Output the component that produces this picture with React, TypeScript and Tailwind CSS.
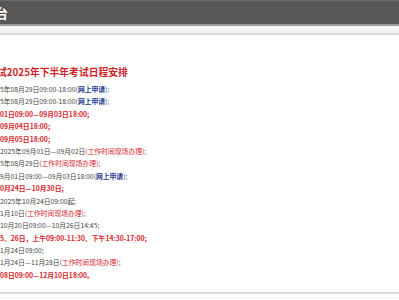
import React from "react";

const font = { fontFamily: '"Noto Sans CJK SC", "Noto Sans", sans-serif' };

type Seg = { t: string; c?: "red" | "blue" | "redb" };

const lines: Seg[][] = [
  [{ t: "5年08月29日09:00-18:00(" }, { t: "网上申请", c: "blue" }, { t: ");" }],
  [{ t: "5年08月29日09:00-18:00(" }, { t: "网上申请", c: "blue" }, { t: ");" }],
  [{ t: "01日09:00—09月03日18:00;", c: "redb" }],
  [{ t: "09月04日18:00;", c: "redb" }],
  [{ t: "09月05日18:00;", c: "redb" }],
  [{ t: "2025年09月01日—09月02日" }, { t: "(工作时间现场办理)", c: "red" }, { t: ";" }],
  [{ t: "5年08月29日" }, { t: "(工作时间现场办理)", c: "red" }, { t: ";" }],
  [{ t: "9月01日09:00—09月03日18:00(" }, { t: "网上申请", c: "blue" }, { t: ");" }],
  [{ t: "0月24日—10月30日;", c: "redb" }],
  [{ t: "2025年10月24日09:00起;" }],
  [{ t: "1月10日" }, { t: "(工作时间现场办理)", c: "red" }, { t: ";" }],
  [{ t: "10月20日09:00—10月26日14:45;" }],
  [{ t: "5、26日，上午09:00-11:30、下午14:30-17:00;", c: "redb" }],
  [{ t: "1月24日09:00;" }],
  [{ t: "1月24日—11月28日" }, { t: "(工作时间现场办理)", c: "red" }, { t: ";" }],
  [{ t: "08日09:00—12月10日18:00。", c: "redb" }],
];

function cls(c?: Seg["c"]) {
  if (c === "blue") return "text-[#1d3a93] font-bold";
  if (c === "red") return "text-[#d8232a]";
  if (c === "redb") return "text-[#d8232a] font-bold";
  return "text-[#444444]";
}

export default function App() {
  return (
    <div className="w-[399px] h-[300px] bg-white overflow-hidden" style={font}>
      <div className="h-[24px] bg-[#575757] border-t border-[#6b6b6b] flex items-center overflow-hidden">
        <span className="ml-[-5px] text-white font-bold text-[13px] leading-none">台</span>
      </div>
      <div className="h-[2px] bg-[#9a9a9a]" />
      <div className="h-[7px] bg-[#f4f4f4]" />
      <div className="h-[2px] bg-[#dadada]" />
      <div className="pt-[30px] overflow-hidden">
        <div className="h-[14px] leading-[14px] text-[9.8px] font-bold text-[#d21f26] whitespace-nowrap ml-[-3px]">
          试2025年下半年考试日程安排
        </div>
        <div className="mt-[4px] flex flex-col">
          {lines.map((segs, i) => (
            <div key={i} className="h-[12.4px] leading-[12.4px] text-[6.8px] whitespace-nowrap">
              {segs.map((s, j) => (
                <span key={j} className={cls(s.c)}>
                  {s.t}
                </span>
              ))}
            </div>
          ))}
        </div>
        <div className="mt-[10.5px] h-[2px] bg-[#dcdcdc]" />
        <div className="mt-[3px] h-px bg-[#efefef]" />
      </div>
    </div>
  );
}
